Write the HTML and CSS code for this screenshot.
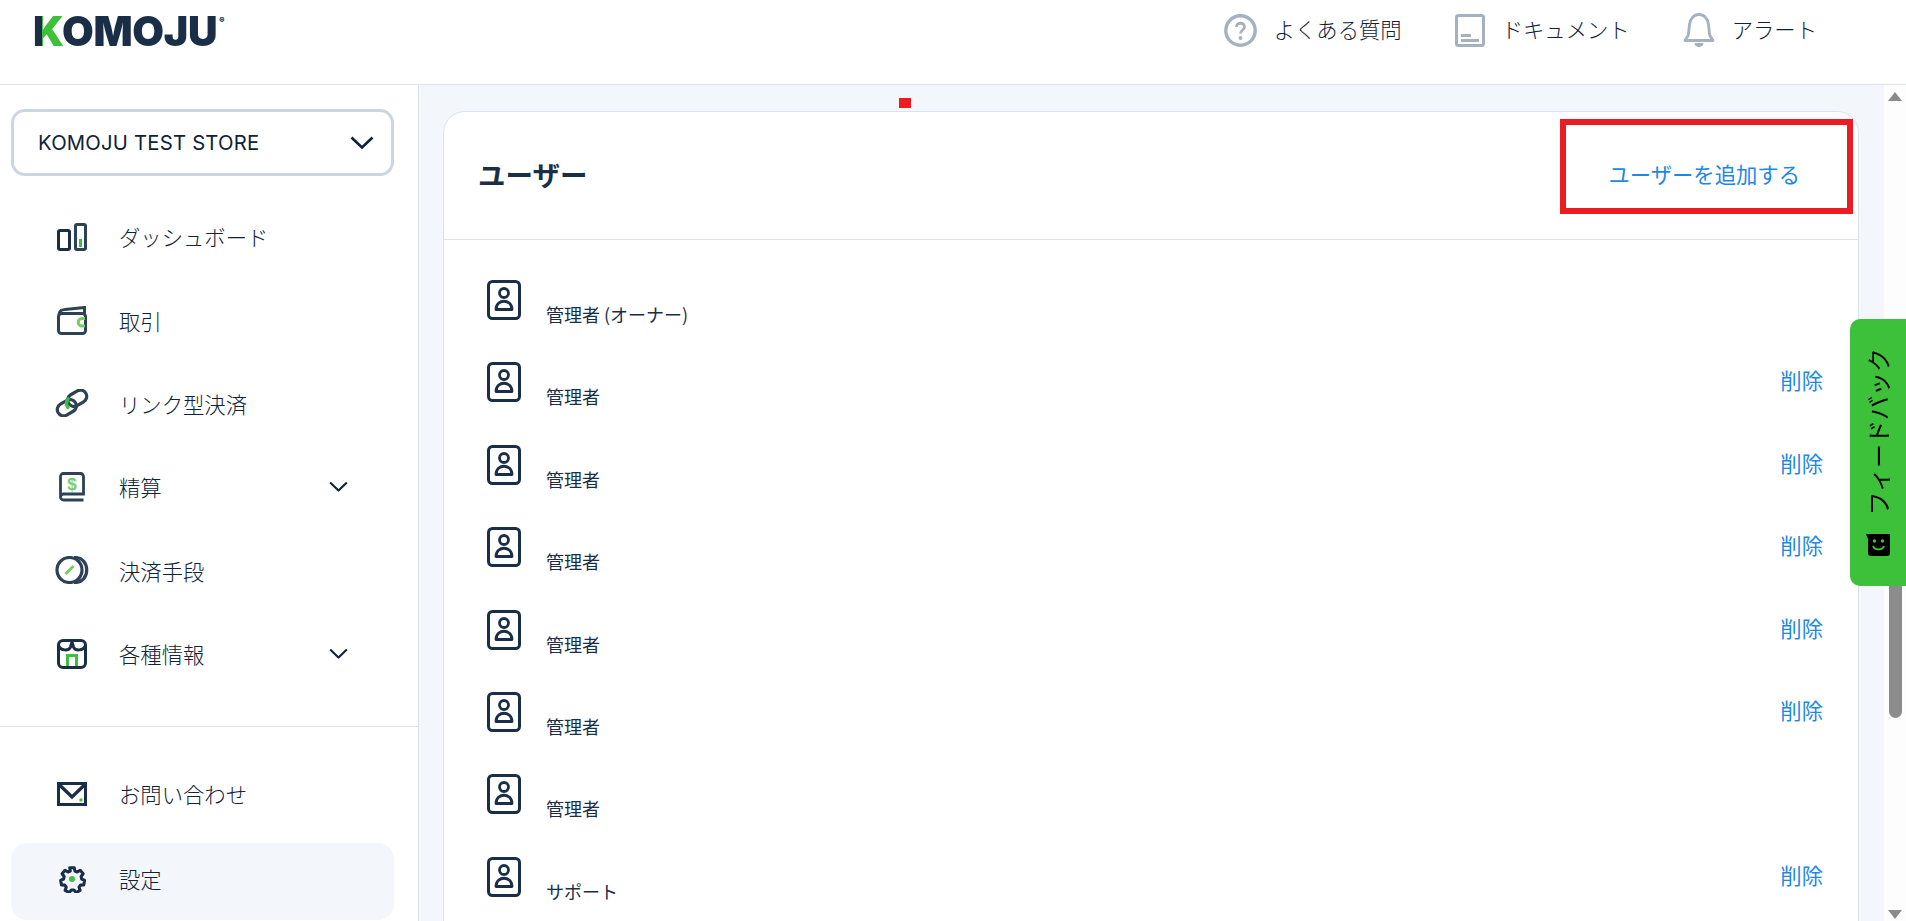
FILE: index.html
```html
<!DOCTYPE html>
<html lang="ja">
<head>
    <meta charset="UTF-8">
    <meta name="viewport" content="width=device-width, initial-scale=1.0">
    <title>ユーザー</title>
    <link rel="stylesheet" href="styles.css">
</head>
<body>
    <svg class="sprites" width="0" height="0">
        <symbol id="chevron" viewBox="0 0 24 13"><path d="M1.500 1.500 12 11.500 22.500 1.500" fill="none" stroke="currentColor" stroke-width="2.600"/></symbol>
        <symbol id="user-card" viewBox="0 0 34 40">
            <rect x="1.500" y="1.500" width="31" height="37" rx="4" fill="none" stroke="#1a2f47" stroke-width="3"/>
            <circle cx="17" cy="13" r="4.500" fill="none" stroke="#1a2f47" stroke-width="2.800"/>
            <path d="M9 29.500c0-11 16-11 16 0z" fill="none" stroke="#1a2f47" stroke-width="2.800" stroke-linejoin="round"/>
        </symbol>
    </svg>

    <header class="topbar">
        <div class="logo">KOMOJU<sup>®</sup></div>
        <nav class="topnav">
            <a class="topnav-item">
                <svg width="33" height="33" viewBox="0 0 33 33"><circle cx="16.500" cy="16.500" r="14.700" fill="none" stroke="#a5b1c0" stroke-width="3.400"/><path d="M12.500 13c0-5 8-5 8 0 0 3-4 3-4 6.500" fill="none" stroke="#a5b1c0" stroke-width="2.800"/><circle cx="16.500" cy="24" r="1.900" fill="#a5b1c0"/></svg>
                <span>よくある質問</span>
            </a>
            <a class="topnav-item">
                <svg width="30" height="33" viewBox="0 0 30 33"><rect x="1.500" y="1.500" width="27" height="30" rx="2" fill="none" stroke="#a5b1c0" stroke-width="3"/><path d="M6 21.500h10M6 26.500h18" stroke="#a5b1c0" stroke-width="2.800"/></svg>
                <span>ドキュメント</span>
            </a>
            <a class="topnav-item">
                <svg width="32" height="36" viewBox="0 0 32 36"><path d="M2 28.500c0-2 3-2.500 3.500-6.500l1-9.500c.7-6 4.500-10 9.500-10s8.800 4 9.500 10l1 9.500c.5 4 3.500 4.500 3.500 6.500z" fill="none" stroke="#a5b1c0" stroke-width="2.800" stroke-linejoin="round"/><path d="M11.500 31h9c0 5.500-9 5.500-9 0z" fill="#a5b1c0"/></svg>
                <span>アラート</span>
            </a>
        </nav>
    </header>

    <div class="layout">
        <aside class="sidebar">
            <div class="store-select">
                <span>KOMOJU TEST STORE</span>
                <svg width="24" height="13"><use href="#chevron"/></svg>
            </div>
            <nav class="side-nav">
                <a class="side-item">
                    <span class="side-icon"><svg width="30" height="28" viewBox="0 0 30 28"><rect x="1.500" y="7.500" width="11" height="19" rx="1.500" fill="none" stroke="#1a2f47" stroke-width="3"/><rect x="18.500" y="1.500" width="10" height="25" rx="1.500" fill="none" stroke="#2d4157" stroke-width="3"/><rect x="22" y="16" width="3" height="8" fill="#3ec13a"/></svg></span>
                    ダッシュボード
                </a>
                <a class="side-item">
                    <span class="side-icon"><svg width="30" height="29" viewBox="0 0 30 29"><rect x="1.500" y="7.500" width="27" height="20" rx="3" fill="none" stroke="#2d4157" stroke-width="3"/><path d="M2 8C3 4 5 4 8 3.500L27.500 1.500v6" fill="none" stroke="#2d4157" stroke-width="3"/><path d="M28 12.500h-3a3.800 3.800 0 0 0 0 7.600h3" fill="none" stroke="#78cc66" stroke-width="3"/></svg></span>
                    取引
                </a>
                <a class="side-item">
                    <span class="side-icon"><svg width="34" height="28" viewBox="0 0 34 28"><g fill="none" stroke="#2d4157" stroke-width="3.200"><rect x="1.800" y="12.500" width="20" height="12.500" rx="6.200" transform="rotate(-30 11.800 18.700)"/><rect x="12.200" y="3" width="20" height="12.500" rx="6.200" transform="rotate(-30 22.200 9.300)"/></g><path d="M13 10c-2 3-2 6 0 8.500" fill="none" stroke="#3ec13a" stroke-width="3.400" stroke-linecap="round"/></svg></span>
                    リンク型決済
                </a>
                <a class="side-item">
                    <span class="side-icon"><svg width="26" height="30" viewBox="0 0 26 30"><path d="M24.500 22H4.500a3 3 0 0 0-3 3V4.500a3 3 0 0 1 3-3h17a3 3 0 0 1 3 3z" fill="none" stroke="#2d4157" stroke-width="2.800"/><path d="M1.500 25a3 3 0 0 0 3 3h20" fill="none" stroke="#2d4157" stroke-width="2.800"/><text x="13" y="18" text-anchor="middle" class="dollar">$</text></svg></span>
                    精算
                    <svg class="side-chevron" width="19" height="11" viewBox="0 0 24 13"><use href="#chevron"/></svg>
                </a>
                <a class="side-item">
                    <span class="side-icon"><svg width="34" height="28" viewBox="0 0 34 28"><circle cx="14.500" cy="14" r="12.500" fill="none" stroke="#2d4157" stroke-width="3.200"/><path d="M19 1.500c17-1 17 26 0 25" fill="none" stroke="#2d4157" stroke-width="3.200"/><path d="M10.500 18 18.500 10" stroke="#78cc66" stroke-width="3"/></svg></span>
                    決済手段
                </a>
                <a class="side-item">
                    <span class="side-icon"><svg width="30" height="30" viewBox="0 0 30 30"><rect x="1.500" y="1.500" width="27" height="27" rx="4.500" fill="none" stroke="#1a2f47" stroke-width="3"/><path d="M2 7c1.500 5 10 5 11.500 1l1.500-5 1.500 5c1.500 4 10 4 11.500-1" fill="none" stroke="#1a2f47" stroke-width="3"/><path d="M10.500 27V16.500h9V27" fill="none" stroke="#3ec13a" stroke-width="3"/></svg></span>
                    各種情報
                    <svg class="side-chevron" width="19" height="11" viewBox="0 0 24 13"><use href="#chevron"/></svg>
                </a>
            </nav>
            <div class="side-bottom">
                <a class="side-item contact">
                    <span class="side-icon"><svg width="30" height="24" viewBox="0 0 30 24"><rect x="1.500" y="1.500" width="27" height="21" fill="none" stroke="#1a2f47" stroke-width="3"/><path d="M2 2.500 15 15 28 2.500" fill="none" stroke="#1a2f47" stroke-width="3.400"/><rect x="22.500" y="16.500" width="3" height="3" fill="#3ec13a"/></svg></span>
                    お問い合わせ
                </a>
                <a class="side-item settings">
                    <span class="side-icon"><svg width="28" height="28" viewBox="0 0 28 28"><path d="M11.500 1.500h5l.8 3.700 2.600 1.100 3.200-2 3.300 3.900-2.300 3 .6 2.800 3.300 1.500-.9 5-3.700.3-1.600 2.300 1.200 3.500-4.400 2.500-2.500-2.800h-2.800l-2.500 2.800-4.400-2.500 1.200-3.500-1.600-2.300-3.700-.3-.9-5 3.300-1.500.6-2.800-2.300-3 3.300-3.900 3.200 2 2.600-1.100z" fill="none" stroke="#1a2f47" stroke-width="3.400" stroke-linejoin="round" transform="translate(1.400 1.400) scale(.9)"/><circle cx="14" cy="14" r="3" fill="#3ec13a"/></svg></span>
                    設定
                </a>
            </div>
        </aside>

        <main class="content">
            <section class="card">
                <div class="card-head">
                    <h1>ユーザー</h1>
                    <a class="link">ユーザーを追加する</a>
                </div>
                <ul class="user-list">
                    <li class="user-row"><svg width="34" height="40"><use href="#user-card"/></svg><span class="role">管理者 (オーナー)</span></li>
                    <li class="user-row"><svg width="34" height="40"><use href="#user-card"/></svg><span class="role">管理者</span><a class="link">削除</a></li>
                    <li class="user-row"><svg width="34" height="40"><use href="#user-card"/></svg><span class="role">管理者</span><a class="link">削除</a></li>
                    <li class="user-row"><svg width="34" height="40"><use href="#user-card"/></svg><span class="role">管理者</span><a class="link">削除</a></li>
                    <li class="user-row"><svg width="34" height="40"><use href="#user-card"/></svg><span class="role">管理者</span><a class="link">削除</a></li>
                    <li class="user-row"><svg width="34" height="40"><use href="#user-card"/></svg><span class="role">管理者</span><a class="link">削除</a></li>
                    <li class="user-row"><svg width="34" height="40"><use href="#user-card"/></svg><span class="role">管理者</span></li>
                    <li class="user-row"><svg width="34" height="40"><use href="#user-card"/></svg><span class="role">サポート</span><a class="link">削除</a></li>
                </ul>
            </section>
        </main>

        <div class="scrollbar">
            <span class="arrow-up"></span>
            <span class="track"><span class="thumb"></span></span>
            <span class="arrow-down"></span>
        </div>
    </div>

    <!-- annotation marks on top of the screenshot -->
    <div class="mark-box"></div>
    <div class="mark-dot"></div>

    <div class="feedback">
        <span class="feedback-text">フィードバック</span>
        <svg width="24" height="22" viewBox="0 0 24 22"><path d="M2 0h22v19a3 3 0 0 1-3 3H5a3 3 0 0 1-3-3V5L0 0z" fill="#000"/><circle cx="8.500" cy="7" r="1.700" fill="#3ec13a"/><circle cx="16.500" cy="7" r="1.700" fill="#3ec13a"/><path d="M7 12c1.500 4.500 9.500 4.500 11 0" fill="none" stroke="#3ec13a" stroke-width="2"/></svg>
    </div>
</body>
</html>
```

FILE: styles.css
```css
html, body {
    height: 100%;
}

body {
    margin: 0;
    overflow: hidden;
    font-family: "Noto Sans CJK JP", "Noto Sans", sans-serif;
    font-weight: 300;
    color: #0f2238;
    background-color: white;
}

a {
    color: inherit;
    text-decoration: none;
}

.sprites {
    position: absolute;
}

/* top bar */
.topbar {
    height: 84px;
    border-bottom: 1px solid #dbe4ee;
    display: flex;
    justify-content: space-between;
    padding-left: 33px;
    padding-right: 89px;
}

.logo {
    font-family: Inter, "Liberation Sans", sans-serif;
    font-weight: 900;
    font-size: 41px;
    line-height: 30px;
    letter-spacing: -0.3px;
    height: 30px;
    margin-top: 16px;
    background: linear-gradient(90deg, #1a2f47 0, #1a2f47 9px, #3ec13a 9px, #3ec13a 30px, #1a2f47 30px);
    -webkit-background-clip: text;
    background-clip: text;
    color: transparent;
}

.logo sup {
    font-size: 8px;
    line-height: 8px;
    vertical-align: top;
    font-weight: 400;
    color: #1a2f47;
    margin-left: 2px;
}

.topnav {
    display: flex;
    gap: 53px;
    height: 60px;
    align-items: center;
}

.topnav-item {
    display: flex;
    align-items: center;
    gap: 17px;
    font-size: 21.330px;
}

.topnav-item span {
    margin-bottom: 4px;
}

/* sidebar */
.layout {
    display: flex;
    height: 836px;
}

.sidebar {
    width: 383px;
    flex-shrink: 0;
    border-right: 1px solid #dbe4ee;
    padding: 24px 24px 0 11px;
}

.store-select {
    height: 61px;
    border: 3px solid #cbd6e2;
    border-radius: 14px;
    display: flex;
    align-items: center;
    justify-content: space-between;
    padding: 0 17px 0 24px;
    font-family: Inter, "Noto Sans", sans-serif;
    font-weight: 400;
    font-size: 20.300px;
    letter-spacing: 0.2px;
}

.side-nav {
    margin-top: 19px;
    height: 531px;
}

.side-item {
    height: 83.400px;
    display: flex;
    align-items: center;
    font-size: 21.330px;
    padding-left: 44px;
}

.side-icon {
    width: 34px;
    margin-right: 30px;
    display: flex;
    justify-content: center;
}

.side-chevron {
    margin-left: auto;
    margin-right: 46px;
}

.side-bottom {
    margin-right: -24px;
    margin-left: -11px;
    padding: 26px 24px 0 11px;
    border-top: 1px solid #dbe4ee;
}

.contact {
    height: 81px;
}

.settings {
    height: 71px;
    padding-bottom: 6px;
    margin-top: 9px;
    border-radius: 16px;
    background-color: #f3f6fa;
}

/* main panel */
.content {
    flex: 1;
    background-color: #f3f6fa;
    padding: 26px 25px 0 24px;
    overflow: hidden;
}

.card {
    background-color: white;
    border: 1px solid #dbe4ee;
    border-radius: 22px 22px 0 0;
}

.card-head {
    height: 123px;
    padding: 0 58px 4px 34px;
    border-bottom: 1px solid #dbe4ee;
    display: flex;
    align-items: center;
    justify-content: space-between;
}

.card-head h1 {
    margin: 0;
    font-size: 27.500px;
    font-weight: 700;
    color: #1a2f47;
}

.link {
    color: #1e88e5;
    font-size: 21.330px;
    font-weight: 400;
}

.user-list {
    list-style: none;
    margin: 0;
    padding: 40px 35px 0 43px;
}

.user-row {
    height: 82.400px;
    display: flex;
    align-items: flex-start;
}

.role {
    margin-left: 25px;
    margin-top: 19px;
    font-size: 18px;
    font-weight: 400;
    line-height: 30px;
    color: #1a2f47;
}

.user-row .link {
    margin-left: auto;
    margin-top: 3px;
    line-height: 30px;
}

/* fake browser scrollbar */
.scrollbar {
    width: 22px;
    flex-shrink: 0;
    background-color: #fdfdfd;
    display: flex;
    flex-direction: column;
    align-items: center;
}

.arrow-up, .arrow-down {
    width: 0;
    height: 0;
    border-left: 7px solid transparent;
    border-right: 7px solid transparent;
}

.arrow-up {
    margin-top: 7px;
    border-bottom: 9px solid #8a8a8a;
}

.arrow-down {
    margin-bottom: 2px;
    border-top: 9px solid #8a8a8a;
}

.track {
    flex: 1;
    width: 13px;
}

.thumb {
    display: block;
    margin-top: 400px;
    height: 217px;
    background-color: #8c8c8c;
    border-radius: 0 0 7px 7px;
}

/* overlays */
.mark-box {
    position: absolute;
    left: 1560px;
    top: 119px;
    width: 281px;
    height: 83px;
    border: 6px solid #ed1c24;
}

.mark-dot {
    position: absolute;
    left: 899px;
    top: 98px;
    width: 12px;
    height: 10px;
    background-color: #ed1c24;
}

.feedback {
    position: absolute;
    left: 1850px;
    top: 319px;
    width: 56px;
    height: 267px;
    box-sizing: border-box;
    padding-top: 29px;
    background-color: #3ec13a;
    border-radius: 10px 0 0 10px;
    display: flex;
    flex-direction: column;
    align-items: center;
    gap: 18px;
    color: black;
}

.feedback-text {
    writing-mode: vertical-rl;
    text-orientation: sideways;
    transform: rotate(180deg);
    font-size: 24px;
    font-weight: 400;
    line-height: 30px;
}

.dollar {
    font-family: "Liberation Sans", sans-serif;
    font-weight: 700;
    font-size: 17px;
    fill: #78cc66;
}
```
